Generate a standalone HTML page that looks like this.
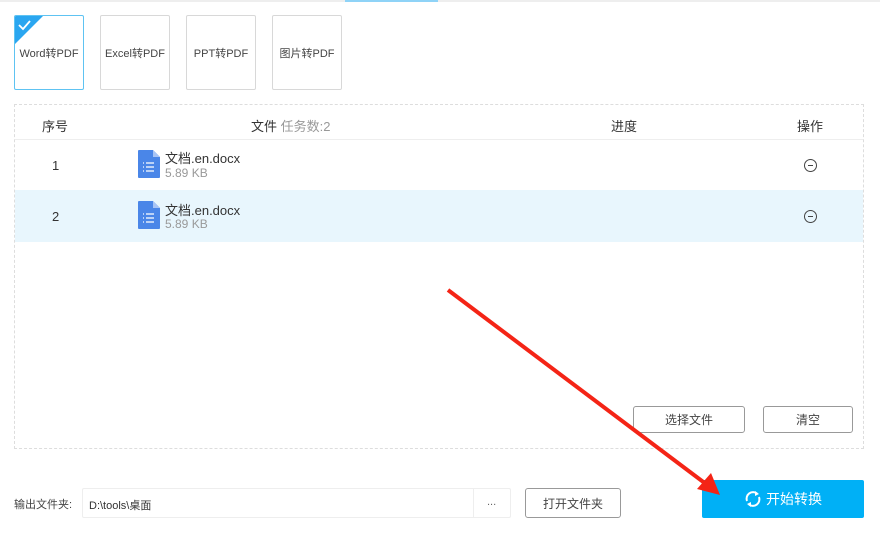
<!DOCTYPE html><html><head><meta charset="utf-8"><style>
*{margin:0;padding:0;box-sizing:border-box}
body{width:880px;height:536px;background:#fff;font-family:"Liberation Sans","Noto Sans CJK SC",sans-serif;position:relative;overflow:hidden;color:#333}
.a{position:absolute}
.tb{position:absolute;top:15px;width:70px;height:75px;border:1px solid #d8d8d8;border-radius:2px;font-size:11px;color:#444;display:flex;align-items:center;justify-content:center}
.btn{position:absolute;border:1px solid #999;border-radius:3px;font-size:12px;color:#444;display:flex;align-items:center;justify-content:center;background:#fff}
.fn{font-size:13px;color:#333;line-height:14px}
.fs{font-size:12px;color:#999;line-height:13px}
.rm{width:13px;height:13px;border:1.3px solid #444;border-radius:50%}
.rm:after{content:"";position:absolute;left:3px;top:5px;width:5px;height:1.3px;background:#444}
</style></head><body>
<div class="a" style="left:0;top:0;width:880px;height:2px;background:#eee"></div>
<div class="a" style="left:345px;top:0;width:93px;height:2px;background:#8fd3f7"></div>
<div class="tb" style="left:14px;border:1.5px solid #5ec3f2;overflow:hidden">Word转PDF
<svg class="a" style="left:0;top:0" width="30" height="30"><polygon points="0,0 28,0 0,28" fill="#2aa6f0"/><path d="M4 9 L8 13 L15 5" stroke="#fff" stroke-width="1.8" fill="none"/></svg></div>
<div class="tb" style="left:100px">Excel转PDF</div>
<div class="tb" style="left:186px">PPT转PDF</div>
<div class="tb" style="left:272px">图片转PDF</div>
<div class="a" style="left:14px;top:104px;width:850px;height:345px;border:1px dashed #ddd"></div>
<div class="a" style="left:15px;top:139px;width:848px;height:1px;background:#eee"></div>
<div class="a" style="left:15px;top:190px;width:848px;height:52px;background:#e8f6fd"></div>
<div class="a" style="left:42px;top:116px;font-size:13px">序号</div>
<div class="a" style="left:251px;top:116px;font-size:13px">文件 <span style="color:#999">任务数:2</span></div>
<div class="a" style="left:611px;top:116px;font-size:13px">进度</div>
<div class="a" style="left:797px;top:116px;font-size:13px">操作</div>
<div class="a" style="left:52px;top:158px;font-size:13px">1</div>
<div class="a" style="left:52px;top:209px;font-size:13px">2</div>
<svg class="a" style="left:138px;top:150px" width="22" height="28"><path d="M0 1 Q0 0 1 0 H15 L22 7 V27 Q22 28 21 28 H1 Q0 28 0 27Z" fill="#4a86e8"/><path d="M15 0 V7 H22Z" fill="#a7c4f5"/><g stroke="#fff" stroke-width="1.3"><path d="M5 13h1M8 13h8M5 17h1M8 17h8M5 21h1M8 21h8"/></g></svg>
<svg class="a" style="left:138px;top:201px" width="22" height="28"><path d="M0 1 Q0 0 1 0 H15 L22 7 V27 Q22 28 21 28 H1 Q0 28 0 27Z" fill="#4a86e8"/><path d="M15 0 V7 H22Z" fill="#a7c4f5"/><g stroke="#fff" stroke-width="1.3"><path d="M5 13h1M8 13h8M5 17h1M8 17h8M5 21h1M8 21h8"/></g></svg>
<div class="a fn" style="left:165px;top:152px">文档.en.docx</div>
<div class="a fs" style="left:165px;top:167px">5.89 KB</div>
<div class="a fn" style="left:165px;top:204px">文档.en.docx</div>
<div class="a fs" style="left:165px;top:218px">5.89 KB</div>
<div class="a rm" style="left:804px;top:159px"></div>
<div class="a rm" style="left:804px;top:210px"></div>
<div class="btn" style="left:633px;top:406px;width:112px;height:27px">选择文件</div>
<div class="btn" style="left:763px;top:406px;width:90px;height:27px">清空</div>
<div class="a" style="left:14px;top:496px;font-size:11px;color:#444">输出文件夹:</div>
<div class="a" style="left:82px;top:488px;width:429px;height:30px;border:1px solid #eee;border-radius:2px;font-size:11px;padding:8px 6px;color:#333">D:\tools\桌面</div>
<div class="a" style="left:473px;top:489px;width:1px;height:28px;background:#eee"></div>
<div class="a" style="left:487px;top:496px;font-size:11px;color:#666">...</div>
<div class="btn" style="left:525px;top:488px;width:96px;height:30px">打开文件夹</div>
<div class="a" style="left:702px;top:480px;width:162px;height:38px;background:#00b0f6;border-radius:2px;color:#fff;font-size:14px;display:flex;align-items:center;justify-content:center">
<svg width="18" height="18" viewBox="0 0 18 18" style="margin-right:4px"><path d="M3 11 A6.5 6.5 0 0 1 13 3.5 M15 7 A6.5 6.5 0 0 1 5 14.5" stroke="#fff" stroke-width="2" fill="none"/><path d="M11 1 L15 4 L11 6Z M7 17 L3 14 L7 12Z" fill="#fff"/></svg>开始转换</div>
<svg class="a" style="left:0;top:0" width="880" height="536"><line x1="448" y1="290" x2="706" y2="484" stroke="#f42416" stroke-width="4"/><polygon points="720,495 711,473 697,489" fill="#f42416"/></svg>
</body></html>
